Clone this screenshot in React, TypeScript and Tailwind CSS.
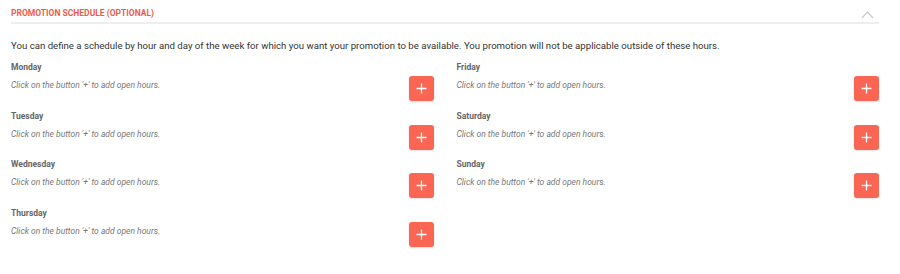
import { useState } from 'react';

const LEFT_DAYS = ['Monday', 'Tuesday', 'Wednesday', 'Thursday'];
const RIGHT_DAYS = ['Friday', 'Saturday', 'Sunday'];

function DayRow({ day }: { day: string }) {
  return (
    <div className="h-[48.5px]">
      <p className="text-[8.5px] font-bold text-[#666] leading-[14px]">{day}</p>
      <div className="flex items-start justify-between">
        <p className="text-[8.5px] italic text-[#777] leading-[12px] mt-[5px]">
          Click on the button '+' to add open hours.
        </p>
        <button className="w-[25px] h-[25px] rounded-[3px] bg-[#fb6553] flex items-center justify-center shadow-[0_1px_2px_rgba(0,0,0,0.12)] mt-[2px]">
          <svg width="11" height="11" viewBox="0 0 11 11">
            <path d="M5.5 0.5v10M0.5 5.5h10" stroke="#fff" strokeWidth="1.3" />
          </svg>
        </button>
      </div>
    </div>
  );
}

export default function App() {
  const [open, setOpen] = useState(true);

  return (
    <div className="w-[900px] h-[274px] bg-white px-[11px] font-['Roboto',sans-serif]">
      {/* header */}
      <div
        className="flex items-end justify-between h-[24px] border-b-2 border-[#eeeeee] w-[868px] cursor-pointer"
        onClick={() => setOpen(!open)}
      >
        <p className="text-[8.5px] font-bold text-[#f05a4a] uppercase leading-[12px] pb-[3px]">
          Promotion Schedule (Optional)
        </p>
        <svg width="13" height="8" viewBox="0 0 13 8" className="mr-[5px] mb-[3px]">
          <path d={open ? 'M1 7l5.5-6 5.5 6' : 'M1 1l5.5 6 5.5-6'} stroke="#cccccc" strokeWidth="1.2" fill="none" />
        </svg>
      </div>

      {open && (
        <div>
          <p className="text-[9.65px] text-[#333] mt-[15px] leading-[14px]">
            You can define a schedule by hour and day of the week for which you want your promotion to be available. You promotion will not be applicable outside of these hours.
          </p>
          <div className="grid grid-cols-2 gap-x-[23px] w-[868px] mt-[7px]">
            <div>
              {LEFT_DAYS.map((d) => (
                <DayRow key={d} day={d} />
              ))}
            </div>
            <div>
              {RIGHT_DAYS.map((d) => (
                <DayRow key={d} day={d} />
              ))}
            </div>
          </div>
        </div>
      )}
    </div>
  );
}
